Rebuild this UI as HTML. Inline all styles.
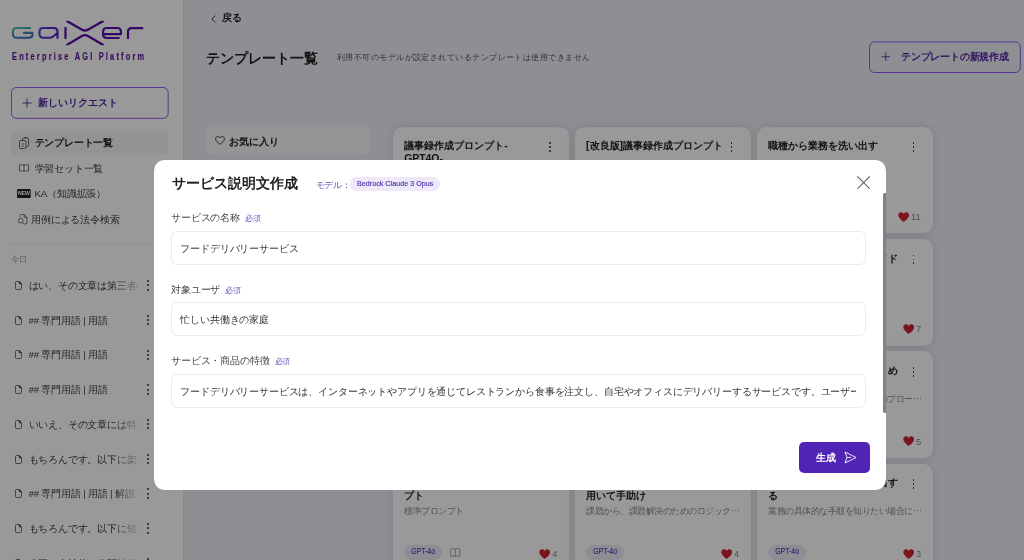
<!DOCTYPE html>
<html lang="ja">
<head>
<meta charset="utf-8">
<title>GaiXer</title>
<style>
*{box-sizing:border-box;margin:0;padding:0}
html,body{width:1024px;height:560px;overflow:hidden}
body{position:relative;font-family:"Liberation Sans",sans-serif;background:#edeef6;color:#222;font-size:10px}
#wrap{position:absolute;left:0;top:0;width:1024px;height:560px;overflow:hidden;will-change:transform}
.abs{position:absolute}
/* sidebar */
#side{position:absolute;left:0;top:0;width:184px;height:560px;background:#fff;border-right:1px solid #e7e8f1}
#tag{position:absolute;left:11.7px;top:50.8px;-webkit-text-stroke:.2px #5a189e;height:12px;line-height:12px;font-size:10px;font-weight:bold;color:#5a189e;white-space:nowrap;letter-spacing:2.98px;transform-origin:0 50%;transform:scaleX(.74)}
#newreq{position:absolute;left:11px;top:87px;width:158px;height:32px;color:#4a1d9e;font-weight:bold;font-size:9.8px;line-height:31.5px;padding-left:27px}
.bd{position:absolute;left:0;top:0}
#newreq svg.pl{position:absolute;left:11px;top:11px}
.nav{position:absolute;left:11px;width:157px;height:24px;border-radius:4px;line-height:24px;font-size:9.8px;letter-spacing:-.2px;color:#383838;white-space:nowrap}
.nav.sel{background:#f5f5f6;font-weight:bold;color:#222}
.nav span{position:absolute;left:23.5px;top:.8px}
.nav svg{position:absolute}
#sdiv{position:absolute;left:11px;top:243px;width:157px;height:1px;background:#eeeeee}
#today{position:absolute;left:11px;top:254.2px;font-size:8px;line-height:12px;color:#999}
.hist{position:absolute;left:11px;width:157px;height:24px;line-height:24px;font-size:9.75px;letter-spacing:-.2px;color:#3a3a3a;white-space:nowrap}
.hist .t{position:absolute;left:17.5px;top:0;width:108px;overflow:hidden;-webkit-mask-image:linear-gradient(90deg,#000 78%,rgba(0,0,0,.25) 100%);mask-image:linear-gradient(90deg,#000 78%,rgba(0,0,0,.25) 100%)}
.hist svg.doc{position:absolute;left:4.1px;top:7px}
.hist .dots{position:absolute;left:135.5px;top:6.2px;width:3px;height:12px}
.hist .dots i{width:2px;height:2px}
.dots i{position:absolute;left:0;width:1.7px;height:1.7px;border-radius:50%;background:#333}
/* main */
#back{position:absolute;left:211px;top:11px;height:14px;line-height:14px;font-size:10px;font-weight:bold;color:#222;white-space:nowrap}
#h1{position:absolute;left:205.5px;top:46.5px;height:22px;line-height:22px;font-size:14.4px;font-weight:bold;color:#222;white-space:nowrap}
#sub{position:absolute;left:337px;top:50px;height:14px;line-height:14px;font-size:8.4px;letter-spacing:.45px;color:#555;white-space:nowrap}
#create{position:absolute;left:869px;top:41px;width:152px;height:32px;color:#4a1d9e;font-weight:bold;font-size:10px;letter-spacing:-.2px;line-height:32px;padding-left:32px;white-space:nowrap}
#create svg.pl{position:absolute;left:11.8px;top:11.2px}
#fav{position:absolute;left:206px;top:126.8px;width:164px;height:28px;border-radius:4px;background:#f7f8fc;line-height:29.4px;font-size:10px;font-weight:bold;color:#222;padding-left:23px}
#fav svg{position:absolute;left:9px;top:9.5px}
.card{position:absolute;width:175.8px;height:106.6px;background:#fff;border-radius:9.6px;box-shadow:0 0 8px rgba(20,20,40,.13)}
.card .ti{position:absolute;left:11px;top:13.6px;width:140px;white-space:nowrap;overflow:hidden;font-size:10.4px;line-height:12.5px;font-weight:bold;color:#222}
.card .de{position:absolute;left:11px;width:162px;font-size:8.6px;letter-spacing:-.5px;line-height:12px;color:#888;white-space:nowrap;overflow:hidden}
.card .dots{position:absolute;left:155.7px;top:15.6px;width:3px;height:10px}
.card .dots i{width:1.8px;height:1.8px;margin-left:-.15px}
.card .pill{position:absolute;left:11.3px;top:81.6px;width:37.6px;height:14.8px;line-height:14.8px;border-radius:8px;background:#ede9f8;color:#5b3cb5;font-size:8.2px;text-align:center;-webkit-text-stroke:.15px #5b3cb5}
.card .pill span{display:inline-block;transform:scaleX(.84)}
.card .hrt{position:absolute;top:85.1px;left:146px}
.card .cnt{position:absolute;top:84.4px;left:159px;font-size:9.3px;line-height:12px;color:#858585}
/* overlay + modal */
#ov{position:absolute;left:0;top:0;width:1024px;height:560px;background:rgba(0,0,0,.4)}
#modal{position:absolute;left:154px;top:160px;width:732.3px;height:329.5px;background:#fff;border-radius:10.4px;overflow:hidden}
#mt{position:absolute;left:17.5px;top:11px;height:24px;line-height:24px;font-size:14.4px;font-weight:bold;color:#222;white-space:nowrap}
#ml{position:absolute;left:161.5px;top:17.5px;height:14px;line-height:14px;font-size:8.6px;letter-spacing:-.3px;color:#5b3cb5;white-space:nowrap}
#mp{position:absolute;left:196px;top:16.5px;height:14.5px;line-height:14.5px;border-radius:8px;background:#ede9f8;color:#5b3cb5;font-size:7.2px;padding:0 7px;white-space:nowrap;-webkit-text-stroke:.2px #5b3cb5}
#mx{position:absolute;left:703px;top:16px}
.lab{position:absolute;left:17px;height:14px;line-height:14px;font-size:9.85px;letter-spacing:-.15px;color:#444;white-space:nowrap}
.lab b{font-weight:normal;font-size:8px;color:#6f55c0;margin-left:5px}
.inp{position:absolute;left:17px;width:695px;height:34px;border:1px solid #e9ebf1;border-radius:6px;line-height:33px;padding-left:8.3px;font-size:9.85px;letter-spacing:-.15px;color:#333;white-space:nowrap;overflow:hidden}
#gen{position:absolute;left:645px;top:282px;width:70.6px;height:31px;border-radius:5px;background:#5025b5;color:#fff;font-weight:bold;font-size:10px;line-height:31px;padding-left:17px}
#gen svg{position:absolute;left:45px;top:8.7px}
#sb{position:absolute;left:728.8px;top:32.9px;width:3.7px;height:220.5px;background:#818181;border-radius:1.8px 0 0 1.8px}
</style>
</head>
<body>
<div id="wrap">
<div id="side">
<svg class="abs" style="left:0;top:0" width="183" height="70" viewBox="0 0 183 70" fill="none" stroke-linejoin="round">
<defs><linearGradient id="lg" gradientUnits="userSpaceOnUse" x1="12" y1="27" x2="16.1" y2="42.6"><stop offset="0" stop-color="#46cdb0"/><stop offset=".5" stop-color="#448cbc"/><stop offset="1" stop-color="#4462c8"/></linearGradient><linearGradient id="lg2" gradientUnits="userSpaceOnUse" x1="39" y1="0" x2="58" y2="0"><stop offset="0" stop-color="#4a3cd4"/><stop offset="1" stop-color="#5318c4"/></linearGradient>
<clipPath id="xc"><rect x="60" y="20.8" width="50" height="24.4"/></clipPath></defs>
<g stroke="url(#lg)" stroke-width="2.1" stroke-linecap="butt">
<path d="M30.9,28 H16.7 Q12.95,28 12.95,31.7 V34.05 Q12.95,37.75 16.7,37.75 H28.7 Q32.45,37.75 32.45,34.5 V32.9 H23"/>
<path stroke="url(#lg2)" d="M57.5,38.8 V31.7 Q57.5,28 53.8,28 H43.3 Q39.55,28 39.55,31.7 V34.05 Q39.55,37.75 43.3,37.75 H50 Q51.6,37.75 52.8,36.8 L57.2,33.2"/>
</g>
<g stroke="#570da7" stroke-width="2.2" stroke-linecap="butt">
<path d="M65.5,27.1 V38.9"/>
<g clip-path="url(#xc)" stroke-linecap="square" stroke-width="2.3"><path d="M67.3,21.3 L81.6,29.6 Q85,31.6 88.4,29.6 L102.7,21.3"/><path d="M67.3,44.7 L81.6,36.2 Q85,34.2 88.4,36.2 L102.7,44.7"/></g>
<path d="M119.6,38 H106.8 Q103.1,38 103.1,34.3 V31.7 Q103.1,28 106.8,28 H117.2 Q120.9,28 120.9,31.7 V34.1 H103.4"/>
<path d="M128,38.9 V31.8 Q128,28.05 131.7,28.05 H143.2"/>
</g>
</svg>
<div id="tag">Enterprise AGI Platform</div>
<div id="newreq"><svg class="bd" width="158" height="32" fill="none"><rect x=".45" y=".45" width="156.7" height="30.9" rx="5" stroke="#7c3aed" stroke-width=".85"/></svg><svg class="pl" width="10" height="10" viewBox="0 0 10 10" stroke="#4a1d9e" stroke-width=".85" fill="none"><path d="M5,0.5V9.5M0.5,5H9.5"/></svg>新しいリクエスト</div>
<div class="nav sel" style="top:130.5px"><svg style="left:7.9px;top:6.2px" width="10" height="12" viewBox="0 0 10 12" fill="none" stroke="#444" stroke-width=".8"><path d="M3.4,3.4 V2.3 Q3.4,0.9 4.8,0.9 H8.1 Q9.5,0.9 9.5,2.3 V8.3 Q9.5,9.7 8.1,9.7 H7"/><path d="M5.3,1 V0.4 H7.5 V1"/><rect x="0.5" y="3.5" width="6.4" height="8.1" rx="1.4"/><path d="M2.7,6.9h2M2.7,9h2"/></svg><span>テンプレート一覧</span></div>
<div class="nav" style="top:156.1px"><svg style="left:8px;top:8.4px" width="10" height="8" viewBox="0 0 10 8" fill="none" stroke="#555" stroke-width=".75"><path d="M0.5,1 Q2.7,0.2 5,1 Q7.3,0.2 9.5,1 V7 Q7.3,6.4 5,7.2 Q2.7,6.4 0.5,7 Z M5,1 V7.2"/></svg><span>学習セット一覧</span></div>
<div class="nav" style="top:181.7px"><svg style="left:6.1px;top:7.4px" width="13.7" height="9.2" viewBox="0 0 13.7 9.2"><rect width="13.7" height="9.2" rx="1.2" fill="#222"/><text x="6.85" y="6.5" font-size="5.2" font-weight="bold" fill="#fff" text-anchor="middle" font-family="Liberation Sans, sans-serif">NEW</text></svg><span>KA（知識拡張）</span></div>
<div class="nav" style="top:207.3px"><svg style="left:7px;top:7px" width="9.5" height="11" viewBox="0 0 9.5 11" fill="none" stroke="#555" stroke-width=".8"><path d="M2,3 V1.6 Q2,0.5 3.1,0.5 H6.2 L9,3.3 V8.6 Q9,9.7 7.9,9.7 H6.6"/><path d="M6.2,0.5 V3.3 H9"/><circle cx="2.8" cy="6.7" r="2.3"/><path d="M4.5,8.4 L6.6,10.4"/></svg><span style="left:20.3px">用例による法令検索</span></div>
<div id="sdiv"></div>
<div id="today">今日</div>
<div class="hist" style="top:274.0px"><svg class="doc" width="7" height="9" viewBox="0 0 7 9" fill="none" stroke="#444" stroke-width=".75"><path d="M0.5,1.5 Q0.5,0.5 1.5,0.5 H4.2 L6.5,2.8 V7.5 Q6.5,8.5 5.5,8.5 H1.5 Q0.5,8.5 0.5,7.5 Z"/><path d="M4.2,0.5 V2.8 H6.5 Z" fill="#444"/></svg><div class="t">はい、その文章は第三者の</div><div class="dots"><i style="top:0"></i><i style="top:4.25px"></i><i style="top:8.5px"></i></div></div>
<div class="hist" style="top:308.7px"><svg class="doc" width="7" height="9" viewBox="0 0 7 9" fill="none" stroke="#444" stroke-width=".75"><path d="M0.5,1.5 Q0.5,0.5 1.5,0.5 H4.2 L6.5,2.8 V7.5 Q6.5,8.5 5.5,8.5 H1.5 Q0.5,8.5 0.5,7.5 Z"/><path d="M4.2,0.5 V2.8 H6.5 Z" fill="#444"/></svg><div class="t">## 専門用語 | 用語</div><div class="dots"><i style="top:0"></i><i style="top:4.25px"></i><i style="top:8.5px"></i></div></div>
<div class="hist" style="top:343.4px"><svg class="doc" width="7" height="9" viewBox="0 0 7 9" fill="none" stroke="#444" stroke-width=".75"><path d="M0.5,1.5 Q0.5,0.5 1.5,0.5 H4.2 L6.5,2.8 V7.5 Q6.5,8.5 5.5,8.5 H1.5 Q0.5,8.5 0.5,7.5 Z"/><path d="M4.2,0.5 V2.8 H6.5 Z" fill="#444"/></svg><div class="t">## 専門用語 | 用語</div><div class="dots"><i style="top:0"></i><i style="top:4.25px"></i><i style="top:8.5px"></i></div></div>
<div class="hist" style="top:378.1px"><svg class="doc" width="7" height="9" viewBox="0 0 7 9" fill="none" stroke="#444" stroke-width=".75"><path d="M0.5,1.5 Q0.5,0.5 1.5,0.5 H4.2 L6.5,2.8 V7.5 Q6.5,8.5 5.5,8.5 H1.5 Q0.5,8.5 0.5,7.5 Z"/><path d="M4.2,0.5 V2.8 H6.5 Z" fill="#444"/></svg><div class="t">## 専門用語 | 用語</div><div class="dots"><i style="top:0"></i><i style="top:4.25px"></i><i style="top:8.5px"></i></div></div>
<div class="hist" style="top:412.8px"><svg class="doc" width="7" height="9" viewBox="0 0 7 9" fill="none" stroke="#444" stroke-width=".75"><path d="M0.5,1.5 Q0.5,0.5 1.5,0.5 H4.2 L6.5,2.8 V7.5 Q6.5,8.5 5.5,8.5 H1.5 Q0.5,8.5 0.5,7.5 Z"/><path d="M4.2,0.5 V2.8 H6.5 Z" fill="#444"/></svg><div class="t">いいえ、その文章には特定</div><div class="dots"><i style="top:0"></i><i style="top:4.25px"></i><i style="top:8.5px"></i></div></div>
<div class="hist" style="top:447.5px"><svg class="doc" width="7" height="9" viewBox="0 0 7 9" fill="none" stroke="#444" stroke-width=".75"><path d="M0.5,1.5 Q0.5,0.5 1.5,0.5 H4.2 L6.5,2.8 V7.5 Q6.5,8.5 5.5,8.5 H1.5 Q0.5,8.5 0.5,7.5 Z"/><path d="M4.2,0.5 V2.8 H6.5 Z" fill="#444"/></svg><div class="t">もちろんです。以下に架空</div><div class="dots"><i style="top:0"></i><i style="top:4.25px"></i><i style="top:8.5px"></i></div></div>
<div class="hist" style="top:482.2px"><svg class="doc" width="7" height="9" viewBox="0 0 7 9" fill="none" stroke="#444" stroke-width=".75"><path d="M0.5,1.5 Q0.5,0.5 1.5,0.5 H4.2 L6.5,2.8 V7.5 Q6.5,8.5 5.5,8.5 H1.5 Q0.5,8.5 0.5,7.5 Z"/><path d="M4.2,0.5 V2.8 H6.5 Z" fill="#444"/></svg><div class="t">## 専門用語 | 用語 | 解説を</div><div class="dots"><i style="top:0"></i><i style="top:4.25px"></i><i style="top:8.5px"></i></div></div>
<div class="hist" style="top:516.9px"><svg class="doc" width="7" height="9" viewBox="0 0 7 9" fill="none" stroke="#444" stroke-width=".75"><path d="M0.5,1.5 Q0.5,0.5 1.5,0.5 H4.2 L6.5,2.8 V7.5 Q6.5,8.5 5.5,8.5 H1.5 Q0.5,8.5 0.5,7.5 Z"/><path d="M4.2,0.5 V2.8 H6.5 Z" fill="#444"/></svg><div class="t">もちろんです。以下に短い</div><div class="dots"><i style="top:0"></i><i style="top:4.25px"></i><i style="top:8.5px"></i></div></div>
<div class="hist" style="top:551.6px"><svg class="doc" width="7" height="9" viewBox="0 0 7 9" fill="none" stroke="#444" stroke-width=".75"><path d="M0.5,1.5 Q0.5,0.5 1.5,0.5 H4.2 L6.5,2.8 V7.5 Q6.5,8.5 5.5,8.5 H1.5 Q0.5,8.5 0.5,7.5 Z"/><path d="M4.2,0.5 V2.8 H6.5 Z" fill="#444"/></svg><div class="t">全国の自治体の公開情報</div><div class="dots"><i style="top:0"></i><i style="top:4.25px"></i><i style="top:8.5px"></i></div></div>

</div>
<div id="back"><svg class="abs" style="left:0;top:3.5px" width="5" height="8" viewBox="0 0 5 8" fill="none" stroke="#333" stroke-width="1"><path d="M4.2,0.6 L0.8,4 L4.2,7.4"/></svg><span style="margin-left:11px">戻る</span></div>
<div id="h1">テンプレート一覧</div>
<div id="sub">利用不可のモデルが設定されているテンプレートは使用できません</div>
<div id="create"><svg class="bd" width="152" height="32" fill="none"><rect x=".5" y=".9" width="150.8" height="30.6" rx="5" stroke="#7c3aed" stroke-width=".85"/></svg><svg class="pl" width="9.5" height="9.5" viewBox="0 0 10 10" stroke="#4a1d9e" stroke-width=".85" fill="none"><path d="M5,0.5V9.5M0.5,5H9.5"/></svg>テンプレートの新規作成</div>
<div id="fav"><svg width="10" height="9" viewBox="0 0 11 10" fill="none" stroke="#333" stroke-width="1"><path d="M5.5,9.2 C3,7.4 0.6,5.5 0.6,3.2 C0.6,1.6 1.8,0.6 3,0.6 C4.1,0.6 5,1.2 5.5,2.1 C6,1.2 6.9,0.6 8,0.6 C9.2,0.6 10.4,1.6 10.4,3.2 C10.4,5.5 8,7.4 5.5,9.2Z"/></svg>お気に入り</div>
<div class="card" style="left:393.2px;top:126.8px"><div class="ti">議事録作成プロンプト-<br>GPT4O-</div><div class="dots"><i style="top:0"></i><i style="top:3.9px"></i><i style="top:7.8px"></i></div><div class="pill"><span>GPT-4o</span></div><svg class="hrt" style="left:145.8px" width="11.4" height="10.4" viewBox="0 0 11 10"><path d="M5.5,9.6 C3,7.6 0.3,5.6 0.3,3.1 C0.3,1.4 1.6,0.3 3,0.3 C4.1,0.3 5,0.9 5.5,1.9 C6,0.9 6.9,0.3 8,0.3 C9.4,0.3 10.7,1.4 10.7,3.1 C10.7,5.6 8,7.6 5.5,9.6Z" fill="#d02030"/></svg><div class="cnt" style="left:159px">9</div></div>
<div class="card" style="left:575.1px;top:126.8px"><div class="ti">[改良版]議事録作成プロンプト</div><div class="dots"><i style="top:0"></i><i style="top:3.9px"></i><i style="top:7.8px"></i></div><div class="pill"><span>GPT-4o</span></div><svg class="hrt" style="left:145.8px" width="11.4" height="10.4" viewBox="0 0 11 10"><path d="M5.5,9.6 C3,7.6 0.3,5.6 0.3,3.1 C0.3,1.4 1.6,0.3 3,0.3 C4.1,0.3 5,0.9 5.5,1.9 C6,0.9 6.9,0.3 8,0.3 C9.4,0.3 10.7,1.4 10.7,3.1 C10.7,5.6 8,7.6 5.5,9.6Z" fill="#d02030"/></svg><div class="cnt" style="left:159px">8</div></div>
<div class="card" style="left:757.1px;top:126.8px"><div class="ti">職種から業務を洗い出す</div><div class="dots"><i style="top:0"></i><i style="top:3.9px"></i><i style="top:7.8px"></i></div><div class="pill"><span>GPT-4o</span></div><svg class="hrt" style="left:141.3px" width="11.4" height="10.4" viewBox="0 0 11 10"><path d="M5.5,9.6 C3,7.6 0.3,5.6 0.3,3.1 C0.3,1.4 1.6,0.3 3,0.3 C4.1,0.3 5,0.9 5.5,1.9 C6,0.9 6.9,0.3 8,0.3 C9.4,0.3 10.7,1.4 10.7,3.1 C10.7,5.6 8,7.6 5.5,9.6Z" fill="#d02030"/></svg><div class="cnt" style="left:154px">11</div></div>
<div class="card" style="left:393.2px;top:239.1px"><div class="ti">文章校正</div><div class="dots"><i style="top:0"></i><i style="top:3.9px"></i><i style="top:7.8px"></i></div><div class="pill"><span>GPT-4o</span></div><svg class="hrt" style="left:145.8px" width="11.4" height="10.4" viewBox="0 0 11 10"><path d="M5.5,9.6 C3,7.6 0.3,5.6 0.3,3.1 C0.3,1.4 1.6,0.3 3,0.3 C4.1,0.3 5,0.9 5.5,1.9 C6,0.9 6.9,0.3 8,0.3 C9.4,0.3 10.7,1.4 10.7,3.1 C10.7,5.6 8,7.6 5.5,9.6Z" fill="#d02030"/></svg><div class="cnt" style="left:159px">7</div></div>
<div class="card" style="left:575.1px;top:239.1px"><div class="ti">メール作成</div><div class="dots"><i style="top:0"></i><i style="top:3.9px"></i><i style="top:7.8px"></i></div><div class="pill"><span>GPT-4o</span></div><svg class="hrt" style="left:145.8px" width="11.4" height="10.4" viewBox="0 0 11 10"><path d="M5.5,9.6 C3,7.6 0.3,5.6 0.3,3.1 C0.3,1.4 1.6,0.3 3,0.3 C4.1,0.3 5,0.9 5.5,1.9 C6,0.9 6.9,0.3 8,0.3 C9.4,0.3 10.7,1.4 10.7,3.1 C10.7,5.6 8,7.6 5.5,9.6Z" fill="#d02030"/></svg><div class="cnt" style="left:159px">7</div></div>
<div class="card" style="left:757.1px;top:239.1px"><div class="ti">プロンプト作成の基本ガイド</div><div class="dots"><i style="top:0"></i><i style="top:3.9px"></i><i style="top:7.8px"></i></div><div class="pill"><span>GPT-4o</span></div><svg class="hrt" style="left:145.8px" width="11.4" height="10.4" viewBox="0 0 11 10"><path d="M5.5,9.6 C3,7.6 0.3,5.6 0.3,3.1 C0.3,1.4 1.6,0.3 3,0.3 C4.1,0.3 5,0.9 5.5,1.9 C6,0.9 6.9,0.3 8,0.3 C9.4,0.3 10.7,1.4 10.7,3.1 C10.7,5.6 8,7.6 5.5,9.6Z" fill="#d02030"/></svg><div class="cnt" style="left:159px">7</div></div>
<div class="card" style="left:393.2px;top:351.4px"><div class="ti">要約</div><div class="dots"><i style="top:0"></i><i style="top:3.9px"></i><i style="top:7.8px"></i></div><div class="pill"><span>GPT-4o</span></div><svg class="hrt" style="left:145.8px" width="11.4" height="10.4" viewBox="0 0 11 10"><path d="M5.5,9.6 C3,7.6 0.3,5.6 0.3,3.1 C0.3,1.4 1.6,0.3 3,0.3 C4.1,0.3 5,0.9 5.5,1.9 C6,0.9 6.9,0.3 8,0.3 C9.4,0.3 10.7,1.4 10.7,3.1 C10.7,5.6 8,7.6 5.5,9.6Z" fill="#d02030"/></svg><div class="cnt" style="left:159px">5</div></div>
<div class="card" style="left:575.1px;top:351.4px"><div class="ti">翻訳</div><div class="dots"><i style="top:0"></i><i style="top:3.9px"></i><i style="top:7.8px"></i></div><div class="pill"><span>GPT-4o</span></div><svg class="hrt" style="left:145.8px" width="11.4" height="10.4" viewBox="0 0 11 10"><path d="M5.5,9.6 C3,7.6 0.3,5.6 0.3,3.1 C0.3,1.4 1.6,0.3 3,0.3 C4.1,0.3 5,0.9 5.5,1.9 C6,0.9 6.9,0.3 8,0.3 C9.4,0.3 10.7,1.4 10.7,3.1 C10.7,5.6 8,7.6 5.5,9.6Z" fill="#d02030"/></svg><div class="cnt" style="left:159px">5</div></div>
<div class="card" style="left:757.1px;top:351.4px"><div class="ti">業務マニュアルの項目まとめ<br>&nbsp;</div><div class="dots"><i style="top:0"></i><i style="top:3.9px"></i><i style="top:7.8px"></i></div><div class="de" style="top:41.8px">業務マニュアル作成するためのプロー⋯</div><div class="pill"><span>GPT-4o</span></div><svg class="hrt" style="left:145.8px" width="11.4" height="10.4" viewBox="0 0 11 10"><path d="M5.5,9.6 C3,7.6 0.3,5.6 0.3,3.1 C0.3,1.4 1.6,0.3 3,0.3 C4.1,0.3 5,0.9 5.5,1.9 C6,0.9 6.9,0.3 8,0.3 C9.4,0.3 10.7,1.4 10.7,3.1 C10.7,5.6 8,7.6 5.5,9.6Z" fill="#d02030"/></svg><div class="cnt" style="left:159px">5</div></div>
<div class="card" style="left:393.2px;top:463.7px"><div class="ti">議事録作成の基本的なプロン<br>プト</div><div class="dots"><i style="top:0"></i><i style="top:3.9px"></i><i style="top:7.8px"></i></div><div class="de" style="top:41.8px">標準プロンプト</div><div class="pill"><span>GPT-4o</span></div><svg class="abs" style="left:56.9px;top:84.3px" width="10.5" height="9.2" viewBox="0 0 10.5 9.2" fill="none" stroke="#8c8c8c" stroke-width=".8"><path d="M0.6,2 Q0.6,0.6 2,0.6 H3.8 Q5.25,0.6 5.25,2 Q5.25,0.6 6.7,0.6 H8.5 Q9.9,0.6 9.9,2 V8.2 H6.5 Q5.25,8.2 5.25,8.7 Q5.25,8.2 4,8.2 H0.6 Z M5.25,2 V8.7"/></svg><svg class="hrt" style="left:145.8px" width="11.4" height="10.4" viewBox="0 0 11 10"><path d="M5.5,9.6 C3,7.6 0.3,5.6 0.3,3.1 C0.3,1.4 1.6,0.3 3,0.3 C4.1,0.3 5,0.9 5.5,1.9 C6,0.9 6.9,0.3 8,0.3 C9.4,0.3 10.7,1.4 10.7,3.1 C10.7,5.6 8,7.6 5.5,9.6Z" fill="#d02030"/></svg><div class="cnt" style="left:159px">4</div></div>
<div class="card" style="left:575.1px;top:463.7px"><div class="ti">課題解決をロジックツリーを<br>用いて手助け</div><div class="dots"><i style="top:0"></i><i style="top:3.9px"></i><i style="top:7.8px"></i></div><div class="de" style="top:41.8px">課題から、課題解決のためのロジック⋯</div><div class="pill"><span>GPT-4o</span></div><svg class="hrt" style="left:145.8px" width="11.4" height="10.4" viewBox="0 0 11 10"><path d="M5.5,9.6 C3,7.6 0.3,5.6 0.3,3.1 C0.3,1.4 1.6,0.3 3,0.3 C4.1,0.3 5,0.9 5.5,1.9 C6,0.9 6.9,0.3 8,0.3 C9.4,0.3 10.7,1.4 10.7,3.1 C10.7,5.6 8,7.6 5.5,9.6Z" fill="#d02030"/></svg><div class="cnt" style="left:159px">4</div></div>
<div class="card" style="left:757.1px;top:463.7px"><div class="ti">業務の手順を詳しく書き出す<br>る</div><div class="dots"><i style="top:0"></i><i style="top:3.9px"></i><i style="top:7.8px"></i></div><div class="de" style="top:41.8px">業務の具体的な手順を知りたい場合に⋯</div><div class="pill"><span>GPT-4o</span></div><svg class="hrt" style="left:145.8px" width="11.4" height="10.4" viewBox="0 0 11 10"><path d="M5.5,9.6 C3,7.6 0.3,5.6 0.3,3.1 C0.3,1.4 1.6,0.3 3,0.3 C4.1,0.3 5,0.9 5.5,1.9 C6,0.9 6.9,0.3 8,0.3 C9.4,0.3 10.7,1.4 10.7,3.1 C10.7,5.6 8,7.6 5.5,9.6Z" fill="#d02030"/></svg><div class="cnt" style="left:159px">3</div></div>

<div id="ov"></div>
<div id="modal">
<div id="mt">サービス説明文作成</div>
<div id="ml">モデル：</div>
<div id="mp">Bedrock Claude 3 Opus</div>
<svg id="mx" width="13.2" height="13.2" viewBox="0 0 13.2 13.2" fill="none" stroke="#5c5c5c" stroke-width="1.05"><path d="M0.4,0.4 L12.8,12.8 M12.8,0.4 L0.4,12.8"/></svg>
<div class="lab" style="top:50.5px">サービスの名称<b>必須</b></div>
<div class="inp" style="top:71px">フードデリバリーサービス</div>
<div class="lab" style="top:122.5px">対象ユーザ<b>必須</b></div>
<div class="inp" style="top:142px">忙しい共働きの家庭</div>
<div class="lab" style="top:194px">サービス・商品の特徴<b>必須</b></div>
<div class="inp" style="top:214px"><span style="display:block;width:676px;overflow:hidden">フードデリバリーサービスは、インターネットやアプリを通じてレストランから食事を注文し、自宅やオフィスにデリバリーするサービスです。ユーザーは様々な</span></div>
<div id="gen">生成<svg width="13" height="13" viewBox="0 0 13 13" fill="none" stroke="#fff" stroke-width=".9" stroke-linejoin="round"><path d="M1,1 L12,6.5 L1,12 L3,6.5 Z M3,6.5 H7"/></svg></div>
<div id="sb"></div>
</div>
</div>
</body>
</html>
